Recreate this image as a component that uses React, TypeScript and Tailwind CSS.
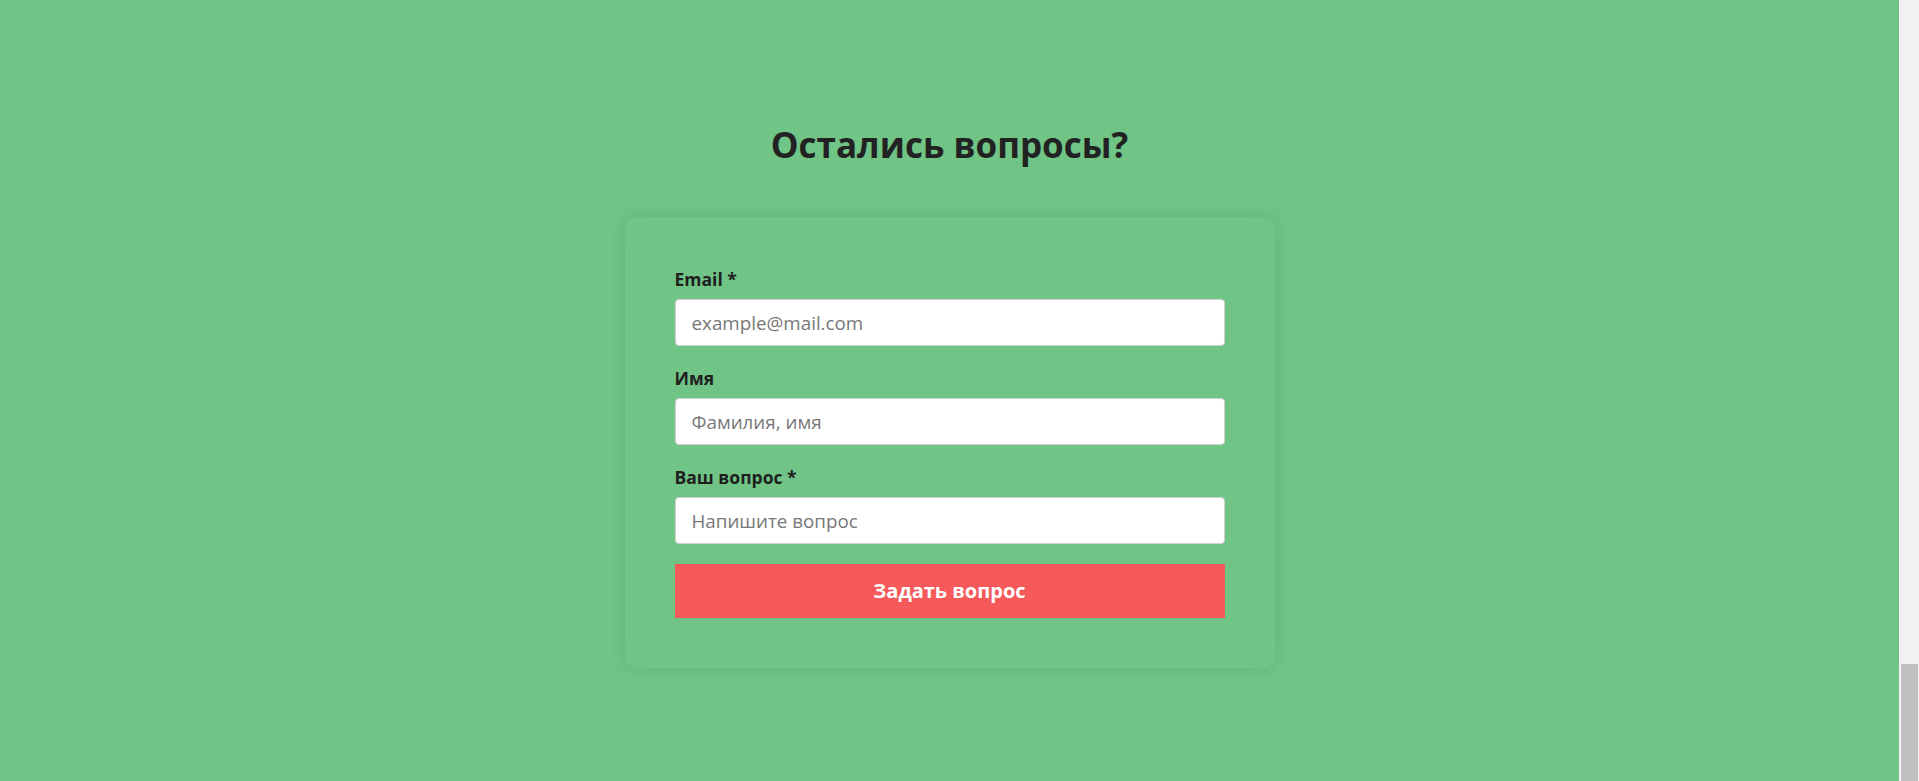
import type { ReactNode } from 'react'

const fields = [
  { label: 'Email *', placeholder: 'example@mail.com', type: 'email' },
  { label: 'Имя', placeholder: 'Фамилия, имя', type: 'text' },
  { label: 'Ваш вопрос *', placeholder: 'Напишите вопрос', type: 'text' },
]

function Field({ label, placeholder, type }: { label: string; placeholder: string; type: string }): ReactNode {
  return (
    <label className="block">
      <span className="mb-2 block text-[17.5px] leading-[24px] font-bold text-[#1f1f1f]">{label}</span>
      <input
        type={type}
        placeholder={placeholder}
        className="block h-[47px] w-full rounded-[4px] border border-[#cfcfcf] bg-white px-4 text-[18.8px] text-[#333] outline-none placeholder:text-[#777]"
      />
    </label>
  )
}

export default function App(): ReactNode {
  return (
    <div className="flex h-[781px] w-full overflow-hidden font-['Open_Sans',sans-serif]">
      <main className="flex flex-1 flex-col items-center bg-[#6fc486] pt-[120px]">
        <h2 className="mb-[48px] text-[35px] leading-[49px] font-bold text-[#222]">Остались вопросы?</h2>

        <form
          className="flex w-[650px] flex-col gap-5 rounded-[12px] bg-[#6fc486] p-[50px] shadow-[0_0_18px_rgba(0,0,0,0.09)]"
          onSubmit={(e) => e.preventDefault()}
        >
          {fields.map((field) => (
            <Field key={field.label} {...field} />
          ))}
          <button
            type="submit"
            className="h-[54px] w-full bg-[#f65959] text-[20px] font-bold text-white"
          >
            Задать вопрос
          </button>
        </form>
      </main>

      {/* browser scrollbar, scrolled to the bottom */}
      <div className="flex w-[20px] flex-col justify-end bg-[#f1f1f1]">
        <div className="mr-[1px] ml-[2px] h-[117px] bg-[#c1c1c1]" />
      </div>
    </div>
  )
}
